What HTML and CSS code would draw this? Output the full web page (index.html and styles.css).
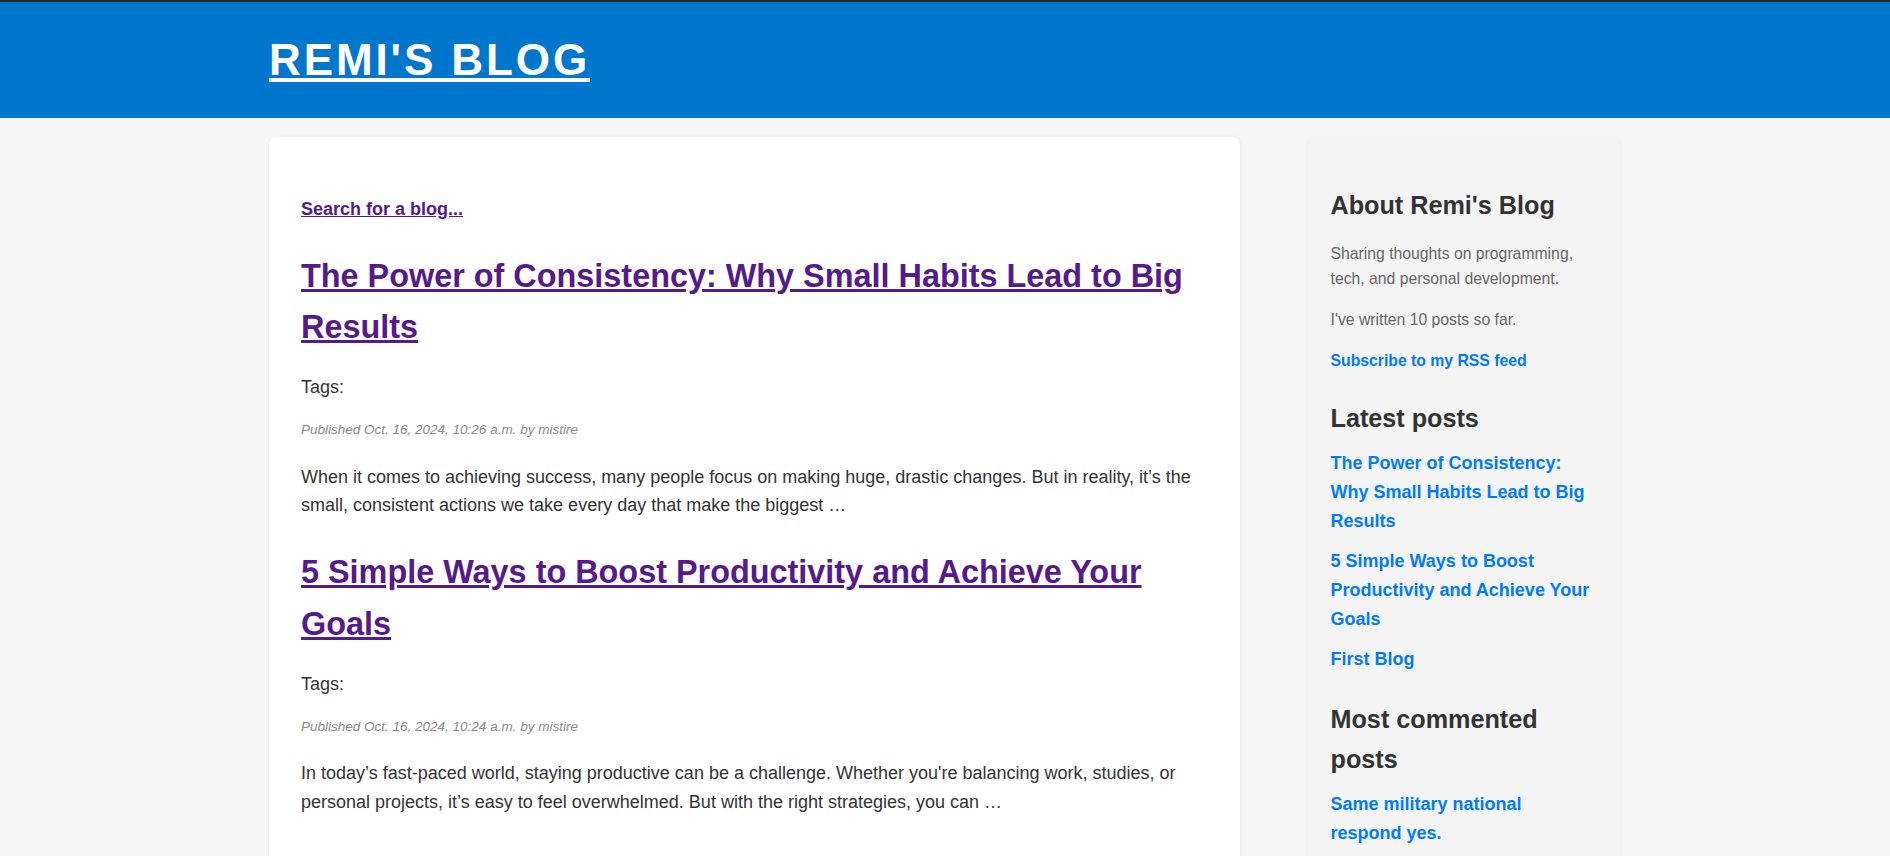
FILE: index.html
```html
<!DOCTYPE html>
<html lang="en">
<head>
<meta charset="utf-8">
<title>Remi's Blog</title>
<link rel="stylesheet" href="styles.css">
</head>
<body>
<header class="site-header">
  <div class="container">
    <h1 class="site-title"><a href="#">REMI'S BLOG</a></h1>
  </div>
</header>
<div class="container layout">
  <main class="content">
    <p class="search"><a href="#">Search for a blog...</a></p>

    <article class="post">
      <h2 class="post-title"><a href="#">The Power of Consistency: Why Small Habits Lead to Big Results</a></h2>
      <p class="tags">Tags: </p>
      <p class="date">Published Oct. 16, 2024, 10:26 a.m. by mistire</p>
      <p class="excerpt">When it comes to achieving success, many people focus on making huge, drastic changes. But in reality, it’s the small, consistent actions we take every day that make the biggest …</p>
    </article>

    <article class="post">
      <h2 class="post-title"><a href="#">5 Simple Ways to Boost Productivity and Achieve Your Goals</a></h2>
      <p class="tags">Tags: </p>
      <p class="date">Published Oct. 16, 2024, 10:24 a.m. by mistire</p>
      <p class="excerpt">In today’s fast-paced world, staying productive can be a challenge. Whether you're balancing work, studies, or personal projects, it’s easy to feel overwhelmed. But with the right strategies, you can …</p>
    </article>

    <article class="post">
      <h2 class="post-title"><a href="#">First Blog</a></h2>
      <p class="tags">Tags: </p>
      <p class="date">Published Oct. 16, 2024, 10:20 a.m. by mistire</p>
      <p class="excerpt">This is my first blog post.</p>
    </article>
  </main>

  <aside class="sidebar">
    <h3 class="side-title">About Remi's Blog</h3>
    <p class="side-text">Sharing thoughts on programming, tech, and personal development.</p>
    <p class="side-text">I've written 10 posts so far.</p>
    <p class="side-text"><a class="side-link" href="#">Subscribe to my RSS feed</a></p>

    <h3 class="side-title">Latest posts</h3>
    <ul class="side-list">
      <li><a class="side-link" href="#">The Power of Consistency: Why Small Habits Lead to Big Results</a></li>
      <li><a class="side-link" href="#">5 Simple Ways to Boost Productivity and Achieve Your Goals</a></li>
      <li><a class="side-link" href="#">First Blog</a></li>
    </ul>

    <h3 class="side-title">Most commented posts</h3>
    <ul class="side-list">
      <li><a class="side-link" href="#">Same military national respond yes.</a></li>
      <li><a class="side-link" href="#">First Blog</a></li>
    </ul>
  </aside>
</div>
</body>
</html>
```

FILE: styles.css
```css
html, body {
  margin: 0;
  padding: 0;
}

body {
  background: #f7f7f7;
  font-family: "Liberation Sans", Arial, sans-serif;
  font-size: 18px;
  line-height: 1.6;
  color: #333;
}

.container {
  width: 1352px;
  margin: 0 auto;
}

.site-header {
  background: #0077cc;
  border-top: 2px solid #1f2933;
  padding: 23px 0 23px;
}

.site-title {
  margin: 0;
  font-size: 44px;
  line-height: 70.4px;
  font-weight: bold;
  letter-spacing: 2.9px;
}

.site-title a {
  color: #fff;
  text-decoration: underline;
}

.layout {
  display: flex;
  align-items: flex-start;
  gap: 68px;
  margin-top: 19px;
}

.content {
  width: 971px;
  flex: 0 0 971px;
  box-sizing: border-box;
  background: #fff;
  border-radius: 8px;
  box-shadow: 0 1px 5px rgba(0, 0, 0, 0.08);
  padding: 32px 32px 32px;
}

.search {
  margin: 25.5px 0 0;
  font-weight: bold;
}

.search a,
.post-title a {
  color: #551a8b;
  text-decoration: underline;
}

.post-title {
  font-size: 32.4px;
  line-height: 1.6;
  margin: 26.9px 0 19px;
}

.post:last-child {
  padding-top: 6px;
}

.tags {
  margin: 0;
}

.date {
  margin: 17px 0 22px;
  font-size: 13.5px;
  font-style: italic;
  color: #8a8a8a;
}

.excerpt {
  margin: 0;
}

.sidebar {
  width: 312px;
  flex: 0 0 312px;
  box-sizing: border-box;
  background: #f4f4f4;
  border-radius: 8px;
  box-shadow: 0 1px 5px rgba(0, 0, 0, 0.07);
  padding: 22px 25px 22px 22.5px;
}

.side-title {
  font-size: 25.2px;
  line-height: 1.6;
  margin: 25.2px 0 11px;
  color: #333;
}

.side-text {
  font-size: 15.75px;
  line-height: 1.6;
  margin: 15.75px 0;
  color: #666;
}

.side-link {
  color: #007bff;
  font-weight: bold;
  text-decoration: none;
}

.side-list {
  list-style: none;
  margin: 0;
  padding: 0;
}

.side-list li {
  margin: 0 0 11.2px;
}
```
